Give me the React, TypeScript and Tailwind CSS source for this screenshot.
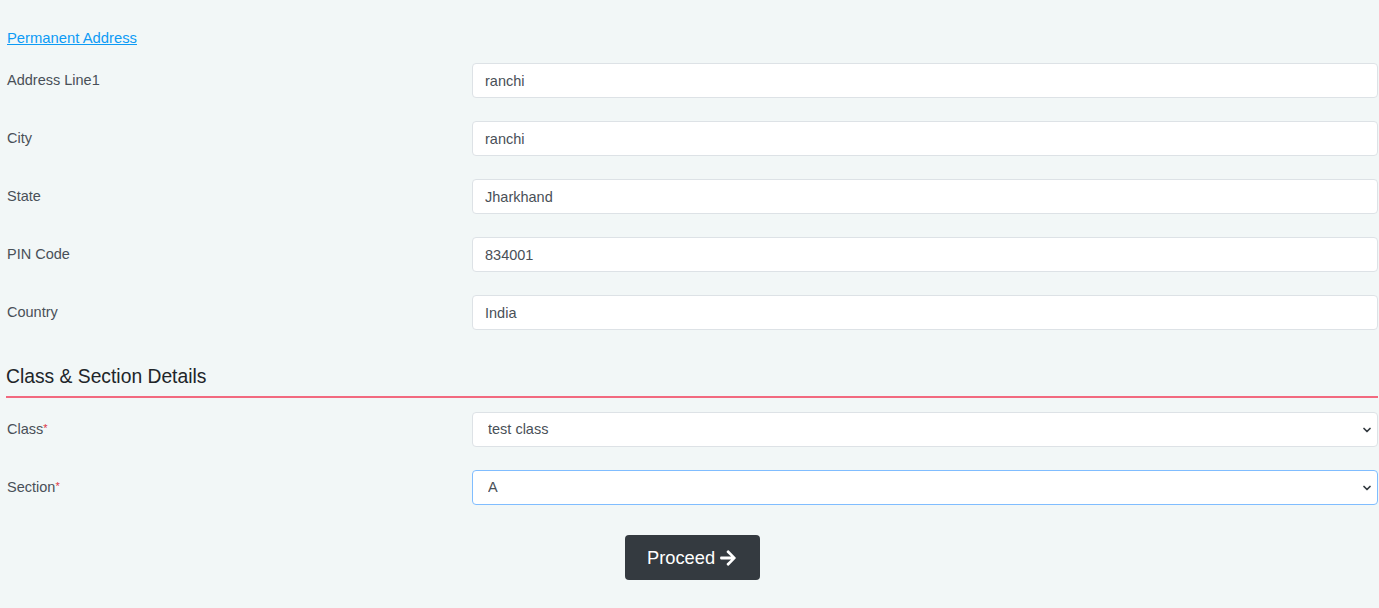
import { ChevronDown } from 'lucide-react'

const ADDRESS = [
  { label: 'Address Line1', value: 'ranchi' },
  { label: 'City', value: 'ranchi' },
  { label: 'State', value: 'Jharkhand' },
  { label: 'PIN Code', value: '834001' },
  { label: 'Country', value: 'India' },
]

function Row({ label, required, children }: { label: string; required?: boolean; children: React.ReactNode }) {
  return (
    <div className="flex items-center">
      <label className="w-[466px] shrink-0 pl-[1px] text-[14.5px] text-[#495057]">
        {label}
        {required && <span className="text-[#dc3545] text-[11px] align-top relative top-[1px]">*</span>}
      </label>
      <div className="flex-1">{children}</div>
    </div>
  )
}

function SelectBox({ value, focused }: { value: string; focused?: boolean }) {
  return (
    <div className="relative">
      <select
        defaultValue={value}
        className={
          'w-full h-[35px] appearance-none bg-white rounded-[4px] pl-[15px] pr-8 text-[14.5px] text-[#495057] outline-none border ' +
          (focused ? 'border-[#80bdff]' : 'border-[#dde2e6]')
        }
      >
        <option>{value}</option>
      </select>
      <ChevronDown size={12} strokeWidth={3.5} className="absolute right-[5px] top-[12px] text-[#343a40] pointer-events-none" />
    </div>
  )
}

export default function App() {
  return (
    <div className="min-h-[608px] bg-[#f2f7f7] pl-[6px] pr-[1px] pt-[26px] font-['Liberation_Sans',Arial,sans-serif]">
      <a href="#" className="text-[14.8px] text-[#0d9bf5] underline pl-[1px] leading-[20px]">
        Permanent Address
      </a>

      <div className="mt-[13px] flex flex-col gap-[23px]">
        {ADDRESS.map(f => (
          <Row key={f.label} label={f.label}>
            <input
              defaultValue={f.value}
              className="w-full h-[35px] bg-white border border-[#dde2e6] rounded-[4px] px-[12px] text-[14.5px] text-[#495057] outline-none"
            />
          </Row>
        ))}
      </div>

      <h2 className="mt-[35px] text-[19.3px] text-[#212529] leading-[24px]">
        Class &amp; Section Details
      </h2>
      <hr className="mt-[7px] border-0 h-[2px] bg-[#f2697f]" />

      <div className="mt-[14px] flex flex-col gap-[23px]">
        <Row label="Class" required>
          <SelectBox value="test class" />
        </Row>
        <Row label="Section" required>
          <SelectBox value="A" focused />
        </Row>
      </div>

      <div className="flex justify-center mt-[30px]">
        <button className="h-[45px] w-[135px] bg-[#343a40] text-white text-[18.3px] rounded-[4px] flex items-center justify-center gap-[4px]">
          Proceed
          <svg width="18" height="18" viewBox="0 0 448 512" fill="currentColor">
            <path d="M190.5 66.9l22.2-22.2c9.4-9.4 24.6-9.4 33.9 0L441 239c9.4 9.4 9.4 24.6 0 33.9L246.6 467.3c-9.4 9.4-24.6 9.4-33.9 0l-22.2-22.2c-9.5-9.5-9.3-25 .4-34.3L311.4 296H24c-13.3 0-24-10.7-24-24v-32c0-13.3 10.7-24 24-24h287.4L190.9 101.2c-9.8-9.3-10-24.8-.4-34.3z" />
          </svg>
        </button>
      </div>
    </div>
  )
}
